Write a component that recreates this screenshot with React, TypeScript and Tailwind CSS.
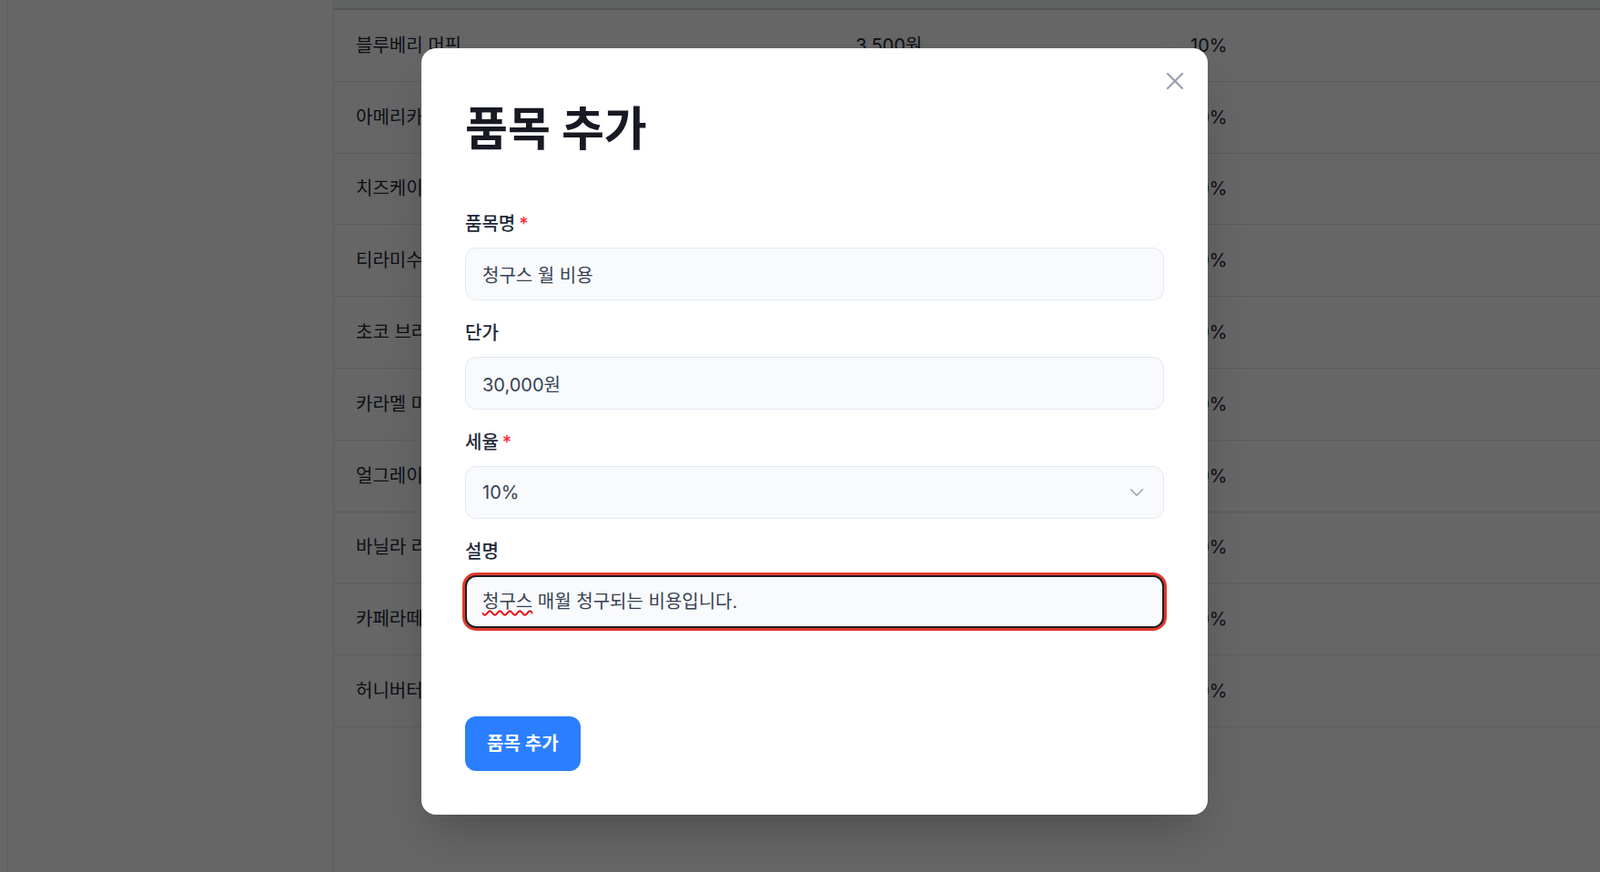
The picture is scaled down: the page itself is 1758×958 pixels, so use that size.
import { X, ChevronDown } from "lucide-react";

const rows = [
  { name: "블루베리 머핀", price: "3,500원", tax: "10%" },
  { name: "아메리카노", price: "4,000원", tax: "10%" },
  { name: "치즈케이크", price: "6,500원", tax: "10%" },
  { name: "티라미수", price: "7,000원", tax: "10%" },
  { name: "초코 브라우니", price: "4,500원", tax: "10%" },
  { name: "카라멜 마끼아또", price: "5,500원", tax: "10%" },
  { name: "얼그레이 티", price: "4,500원", tax: "10%" },
  { name: "바닐라 라떼", price: "5,000원", tax: "10%" },
  { name: "카페라떼", price: "4,500원", tax: "10%" },
  { name: "허니버터 브레드", price: "6,000원", tax: "10%" },
];

function Label({ text, required }: { text: string; required?: boolean }) {
  return (
    <label className="mb-3 block text-xl leading-7 font-medium text-gray-800">
      {text}
      {required && <span className="ml-1 text-red-500">*</span>}
    </label>
  );
}

export default function App() {
  return (
    <div className="relative h-screen w-full overflow-hidden bg-white font-[Inter,'Noto_Sans_CJK_KR',sans-serif]">
      {/* page underneath */}
      <div className="flex h-full">
        <aside className="flex w-[367px] shrink-0 border-r border-gray-200">
          <div className="w-[9px] border-r border-gray-200" />
        </aside>
        <main className="flex-1">
          <div className="h-[11px] border-b-2 border-gray-300 bg-gray-100" />
          {rows.map((r) => (
            <div key={r.name} className="flex h-[78.8px] items-center border-b border-gray-200 text-xl text-gray-800">
              <div className="w-[573px] pl-6">{r.name}</div>
              <div className="w-[368px]">{r.price}</div>
              <div>{r.tax}</div>
            </div>
          ))}
        </main>
      </div>

      {/* overlay + modal */}
      <div className="absolute inset-0 flex items-start justify-center bg-black/60 pt-[53px] pl-8">
        <div className="relative w-[864px] rounded-2xl bg-white p-12 shadow-2xl">
          <button className="absolute top-5 right-5 text-gray-400">
            <X size={32} strokeWidth={1.75} />
          </button>

          <h2 className="mt-[11px] mb-[60px] text-[51px] leading-[60px] font-bold text-[#171923]">품목 추가</h2>

          <div className="mb-[22px]">
            <Label text="품목명" required />
            <input
              readOnly
              value="청구스 월 비용"
              className="h-[58px] w-full rounded-xl border border-slate-200 bg-slate-50 px-[18px] text-xl text-gray-700 outline-none"
            />
          </div>

          <div className="mb-[22px]">
            <Label text="단가" />
            <input
              readOnly
              value="30,000원"
              className="h-[58px] w-full rounded-xl border border-slate-200 bg-slate-50 px-[18px] text-xl text-gray-700 outline-none"
            />
          </div>

          <div className="mb-[22px]">
            <Label text="세율" required />
            <div className="flex h-[58px] w-full items-center justify-between rounded-xl border border-slate-200 bg-slate-50 pr-4 pl-[18px] text-xl text-gray-700">
              <span>10%</span>
              <ChevronDown size={26} strokeWidth={1.4} className="text-gray-400" />
            </div>
          </div>

          <div>
            <Label text="설명" />
            <div className="flex h-[58px] w-full items-center rounded-xl border-2 border-[#1d1d1f] bg-slate-50 px-[17px] text-xl text-gray-700 ring-[3px] ring-[#e0392e]">
              <span className="underline decoration-red-600 decoration-wavy decoration-[1.5px] underline-offset-2">청구스</span>
              <span>&nbsp;매월 청구되는 비용입니다.</span>
            </div>
          </div>

          <div className="mt-[97px]">
            <button className="rounded-xl bg-blue-500 px-6 py-4 text-xl leading-7 font-semibold text-white">품목 추가</button>
          </div>
        </div>
      </div>
    </div>
  );
}
